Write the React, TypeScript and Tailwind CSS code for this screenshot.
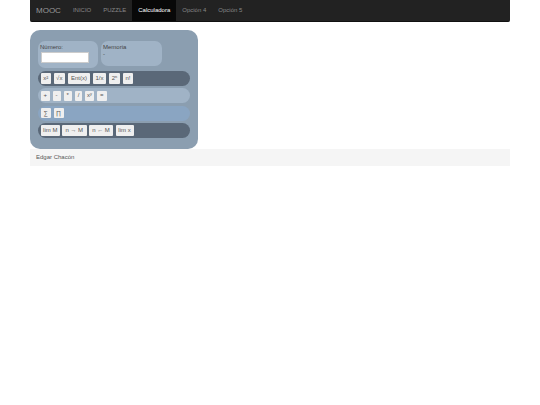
const font = "font-['Liberation_Sans',Arial,sans-serif]";

const rows = [
	{
		bg: 'bg-[#5a6878]',
		gap: 'gap-[3px]',
		keys: [
			['x²', 'w-[9.5px]'],
			['√x', 'w-[11.5px]'],
			['Ent(x)', 'w-[22px]'],
			['1/x', 'w-[13px]'],
			['2ⁿ', 'w-[11px]'],
			['n!', 'w-[10px]'],
		],
	},
	{
		bg: 'bg-[#a0b3c6]',
		gap: 'gap-[3px]',
		keys: [
			['+', 'w-[8.5px]'],
			['-', 'w-[8px]'],
			['*', 'w-[8.5px]'],
			['/', 'w-[7px]'],
			['xʸ', 'w-[9px]'],
			['=', 'w-[9.5px]'],
		],
	},
	{
		bg: 'bg-[#8aa5c2]',
		gap: 'gap-[3px]',
		keys: [
			['∑', 'w-[9.5px]'],
			['∏', 'w-[10.5px]'],
		],
	},
	{
		bg: 'bg-[#5a6878]',
		gap: 'gap-[2.5px]',
		keys: [
			['lim M', 'w-[18.5px]'],
			['n → M', 'w-[24.5px]'],
			['n ← M', 'w-[24px]'],
			['lim x', 'w-[18px]'],
		],
	},
];

const nav = ['INICIO', 'PUZZLE', 'Calculadora', 'Opción 4', 'Opción 5'];

export default function App() {
	return (
		<div className={`${font} min-h-[405px] bg-white px-[30px] antialiased`}>
			<nav className="flex h-[22px] items-stretch rounded-b-[2px] border-b border-[#111] bg-[#222222]">
				<span className="flex items-center pl-[6px] pr-[6px] text-[8px] text-[#999]">MOOC</span>
				{nav.map((item) => (
					<span
						key={item}
						className={`flex items-center px-[6px] text-[6px] ${item === 'Calculadora' ? 'bg-[#080808] text-white' : 'text-[#888]'}`}
					>
						{item}
					</span>
				))}
			</nav>

			<div className="mt-[8px] h-[119px] w-[168px] rounded-[10px] bg-[#8b9eb0] px-[8px] pt-[11px]">
				<div className="flex gap-[3px]">
					<div className="h-[27px] w-[60px] rounded-[7px] bg-[#a0b3c6] pl-[2px] pt-[3px] text-[6px] leading-[6px] text-[#444]">
						Número:
						<div className="ml-[0.5px] mt-[2px] h-[11px] w-[48px] border border-[#ccc] bg-white" />
					</div>
					<div className="h-[25px] w-[61px] rounded-[7px] bg-[#a0b3c6] pl-[2px] pt-[3px] text-[6px] leading-[6px] text-[#444]">
						Memoria
						<div className="mt-[1px]">-</div>
					</div>
				</div>
				<div className="mt-[3px] flex flex-col gap-[2.3px]">
					{rows.map((row, i) => (
						<div key={i} className={`flex h-[15px] items-center rounded-[7.5px] pl-[3px] ${row.gap} ${row.bg}`}>
							{row.keys.map(([label, w]) => (
								<span
									key={label}
									className={`flex h-[10.5px] items-center justify-center rounded-[1px] bg-[#efefef] text-[6px] text-[#555] whitespace-nowrap ${w}`}
								>
									{label}
								</span>
							))}
						</div>
					))}
				</div>
			</div>

			<footer className="flex h-[17px] items-center bg-[#f5f5f5] px-[6px] text-[6px] text-[#555]">Edgar Chacón</footer>
		</div>
	);
}
